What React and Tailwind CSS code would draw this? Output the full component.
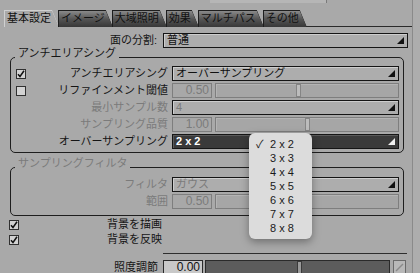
import React from 'react';

const font = "font-['Liberation_Sans','Noto_Sans_CJK_JP',sans-serif]";

const Check = ({ checked }) => (
  <div className="w-[10px] h-[10px] border border-[#303030] bg-[#d2d2d2] flex items-center justify-center shrink-0">
    {checked && (
      <svg width="8" height="8" viewBox="0 0 8 8">
        <path d="M1 4.2 L3 6.5 L7 0.8" fill="none" stroke="#111" strokeWidth="1.5" />
      </svg>
    )}
  </div>
);

const Arrow = ({ light }) => (
  <svg width="7" height="7" viewBox="0 0 7 7" className="absolute right-[3px] bottom-[3px]">
    <polygon points="0,7 7,0 7,7" fill={light ? '#f0f0f0' : '#111'} />
  </svg>
);

const Select = ({ value, disabled, dark }) => (
  <div
    className={`relative flex-1 h-[15px] border border-[#151515] flex items-center pl-[3px] text-[11px] leading-[13px] ${
      dark
        ? 'bg-[#3a3a3a] text-white font-bold shadow-[inset_1px_1px_0_#5a5a5a]'
        : 'bg-[#adadad] shadow-[inset_1px_1px_0_#cdcdcd]'
    } ${disabled ? 'text-[#7b7b7b]' : dark ? '' : 'text-[#111]'}`}
  >
    {value}
    <Arrow light={dark} />
  </div>
);

const Field = ({ value, disabled }) => (
  <div
    className={`w-[40px] h-[15px] border flex items-center justify-end pr-[2px] text-[12px] leading-[13px] shrink-0 ${
      disabled ? 'border-[#7e7e7e] text-[#7b7b7b] bg-[#a8a8a8]' : 'border-[#2a2a2a] text-[#111] bg-[#c8c8c8]'
    }`}
  >
    {value}
  </div>
);

const Slider = ({ thumb, dark, className = 'flex-1' }) => (
  <div
    className={`relative h-[15px] border ${className} ${
      dark ? 'border-[#2a2a2a] bg-[#5c5c5c]' : 'border-[#7e7e7e] bg-[#a6a6a6] shadow-[inset_1px_1px_0_#b4b4b4]'
    }`}
  >
    {thumb != null && (
      <div
        className={`absolute top-0 h-[13px] w-[5px] border ${dark ? 'border-[#3a3a3a] bg-[#9a9a9a]' : 'border-[#858585] bg-[#bcbcbc]'}`}
        style={{ left: thumb }}
      />
    )}
  </div>
);

const Row = ({ label, check, disabled, children }) => (
  <div className="flex items-center h-[15px]">
    <div className="w-[157px] flex items-center shrink-0">
      <div className="w-[10px] ml-[5px]">{check !== undefined && <Check checked={check} />}</div>
      <div className={`flex-1 text-right text-[11px] leading-[13px] ${disabled ? 'text-[#7b7b7b]' : 'text-[#151515]'}`}>
        {label}
      </div>
    </div>
    <div className="flex-1 flex items-center gap-[3px] ml-[4px] mr-[4px]">{children}</div>
  </div>
);

const Tab = ({ label, active }) => (
  <div
    className={`-mr-[1px] h-[17px] [clip-path:polygon(0_0,calc(100%-7px)_0,100%_100%,0_100%)] pt-[1px] pl-[1px] ${
      active ? 'bg-[#d0d0d0]' : 'bg-[#1e1e1e]'
    }`}
  >
    <div
      className={`h-full pl-[2px] pr-[8px] text-[11px] leading-[15px] text-[#111] [clip-path:polygon(0_0,calc(100%-7px)_0,100%_100%,0_100%)] ${
        active ? 'bg-[#a9a9a9]' : 'bg-gradient-to-b from-[#8a8a8a] via-[#555] to-[#383838]'
      }`}
    >
      {label}
    </div>
  </div>
);

const Group = ({ title, disabled, className, children }) => (
  <fieldset className={`ml-[10px] mr-[8px] border border-[#1e1e1e] rounded-[5px] ${className}`}>
    <legend
      className={`ml-[4px] px-[3px] pb-[7px] text-[11px] leading-[11px] ${disabled ? 'text-[#7b7b7b]' : 'text-[#151515]'}`}
    >
      {title}
    </legend>
    {children}
  </fieldset>
);

const sizes = ['2 x 2', '3 x 3', '4 x 4', '5 x 5', '6 x 6', '7 x 7', '8 x 8'];

export default function App() {
  return (
    <div className={`w-[420px] h-[273px] overflow-hidden relative bg-[#a9a9a9] flex items-start ${font}`}>
      <div className="w-[413px] h-[273px] shrink-0 border-r border-[#8a8a8a]">
        <div className="h-[10px] flex">
          <div className="w-[210px]" />
          <div className="w-[117px] h-[3px] bg-[#b6b6b6] border-r border-[#7a7a7a]" />
        </div>
        <div className="flex items-end h-[17px] pl-[4px]">
          <Tab label="基本設定" active />
          <Tab label="イメージ" />
          <Tab label="大域照明" />
          <Tab label="効果" />
          <Tab label="マルチパス" />
          <Tab label="その他" />
          <div className="flex-1 border-b border-[#2a2a2a] h-full" />
        </div>

        <div className="flex items-center h-[15px] mt-[6px]">
          <div className="w-[157px] text-right text-[11px] leading-[13px] text-[#151515]">面の分割:</div>
          <div className="flex-1 flex ml-[6px] mr-[4px]">
            <Select value="普通" />
          </div>
        </div>

        <Group title="アンチエリアシング" className="pb-[3px]">
          <div className="flex flex-col gap-[2px]">
            <Row label="アンチエリアシング" check={true}>
              <Select value="オーバーサンプリング" />
            </Row>
            <Row label="リファインメント閾値" check={false}>
              <Field value="0.50" disabled />
              <Slider thumb={80} />
            </Row>
            <Row label="最小サンプル数" disabled>
              <Select value="4" disabled />
            </Row>
            <Row label="サンプリング品質" disabled>
              <Field value="1.00" disabled />
              <Slider thumb={89} />
            </Row>
            <Row label="オーバーサンプリング">
              <Select value="2 x 2" dark />
            </Row>
          </div>
        </Group>

        <Group title="サンプリングフィルタ" disabled className="mt-[5px] pt-[1px] pb-[6px]">
          <div className="flex flex-col gap-[2px]">
            <Row label="フィルタ" disabled>
              <Select value="ガウス" disabled />
            </Row>
            <Row label="範囲" disabled>
              <Field value="0.50" disabled />
              <Slider thumb={80} />
            </Row>
          </div>
        </Group>

        <div className="flex items-center h-[15px] mt-[1px] pl-[9px]">
          <Check checked />
          <span className="ml-[88px] text-[11px] leading-[13px] text-[#151515]">背景を描画</span>
        </div>
        <div className="flex items-center h-[15px] pl-[9px]">
          <Check checked />
          <span className="ml-[88px] text-[11px] leading-[13px] text-[#151515]">背景を反映</span>
        </div>

        <div className="mt-[6px] ml-[163px] mr-[5px] h-px bg-[#2e2e2e]" />

        <div className="flex items-center h-[15px] mt-[6px]">
          <div className="w-[158px] text-right text-[11px] leading-[13px] text-[#151515]">照度調節</div>
          <div className="ml-[5px]">
            <Field value="0.00" />
          </div>
          <Slider thumb={91} dark className="ml-[2px] w-[185px]" />
          <div className="ml-[3px] w-[13px] h-[15px] border border-[#6a6a6a] bg-[#b8b8b8] flex items-center justify-center">
            <svg width="9" height="9" viewBox="0 0 9 9">
              <path d="M1 8 L8 1" stroke="#8a8a8a" strokeWidth="1.5" />
            </svg>
          </div>
        </div>
      </div>
      <div className="flex-1 h-[273px] bg-[#adadad]" />

      <div className="absolute left-[249px] top-[133px] w-[63px] h-[106px] rounded-[6px] bg-[#dcdcdc] shadow-[0_3px_8px_rgba(0,0,0,0.35)] pt-[4px]">
        {sizes.map((s, i) => (
          <div key={s} className="h-[14px] flex items-center text-[11px] leading-[13px] text-[#1a1a1a]">
            <span className="w-[21px] pl-[7px]">{i === 0 ? '✓' : ''}</span>
            <span>{s}</span>
          </div>
        ))}
      </div>
    </div>
  );
}
